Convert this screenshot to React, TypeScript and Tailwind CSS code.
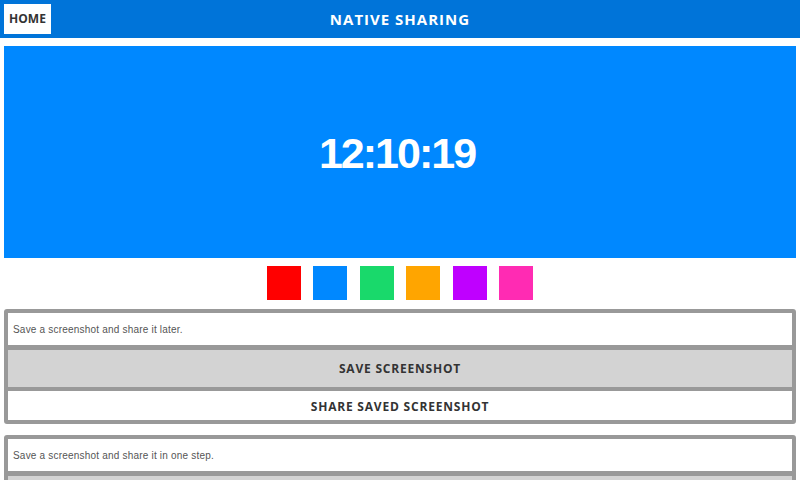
import React from "react";

const swatches = ["#ff0000", "#0088ff", "#19d96b", "#ffa500", "#bf00ff", "#ff2bb3"];

function Card({ text }: { text: string }) {
  return (
    <div className="border-4 border-[#999999] rounded-[3px] bg-[#999999] flex flex-col">
      <div className="h-[32px] bg-white flex items-center px-[5px] text-[10px] tracking-[0.2px] text-[#555555] [font-family:'Liberation_Sans',Arial,sans-serif]">
        {text}
      </div>
      <button className="mt-[5px] h-[37px] bg-[#d3d3d3] text-[12px] font-bold tracking-[0.8px] text-[#333333] [font-family:'Open_Sans',sans-serif]">
        SAVE SCREENSHOT
      </button>
      <button className="mt-[4px] h-[29px] pt-[3px] bg-white text-[12px] font-bold tracking-[0.8px] text-[#333333] [font-family:'Open_Sans',sans-serif]">
        SHARE SAVED SCREENSHOT
      </button>
    </div>
  );
}

export default function App() {
  return (
    <div className="w-[800px] h-[480px] overflow-hidden bg-white">
      <header className="h-[38px] bg-[#0074d9] grid grid-cols-[1fr_auto_1fr] items-center">
        <div className="pl-[4px]">
          <button className="w-[47px] h-[30px] bg-white text-[12px] font-bold text-[#333333] [font-family:'Open_Sans',sans-serif] flex items-center justify-center">
            HOME
          </button>
        </div>
        <h1 className="text-white text-[15px] font-bold tracking-[1px] [font-family:'Open_Sans',sans-serif]">
          NATIVE SHARING
        </h1>
        <div />
      </header>
      <main className="px-[4px]">
        <div className="mt-[8px] h-[212px] bg-[#0088ff] flex items-center justify-center">
          <span className="text-white text-[43px] font-bold tracking-[-2px] leading-none [font-family:'Liberation_Sans',Arial,sans-serif] pt-[2px] pr-[6px]">
            12:10:19
          </span>
        </div>
        <div className="mt-[8px] flex justify-center gap-[12.4px]">
          {swatches.map((c) => (
            <div key={c} className="w-[34px] h-[34px]" style={{ backgroundColor: c }} />
          ))}
        </div>
        <div className="mt-[9px]">
          <Card text="Save a screenshot and share it later." />
        </div>
        <div className="mt-[11px]">
          <Card text="Save a screenshot and share it in one step." />
        </div>
      </main>
    </div>
  );
}
